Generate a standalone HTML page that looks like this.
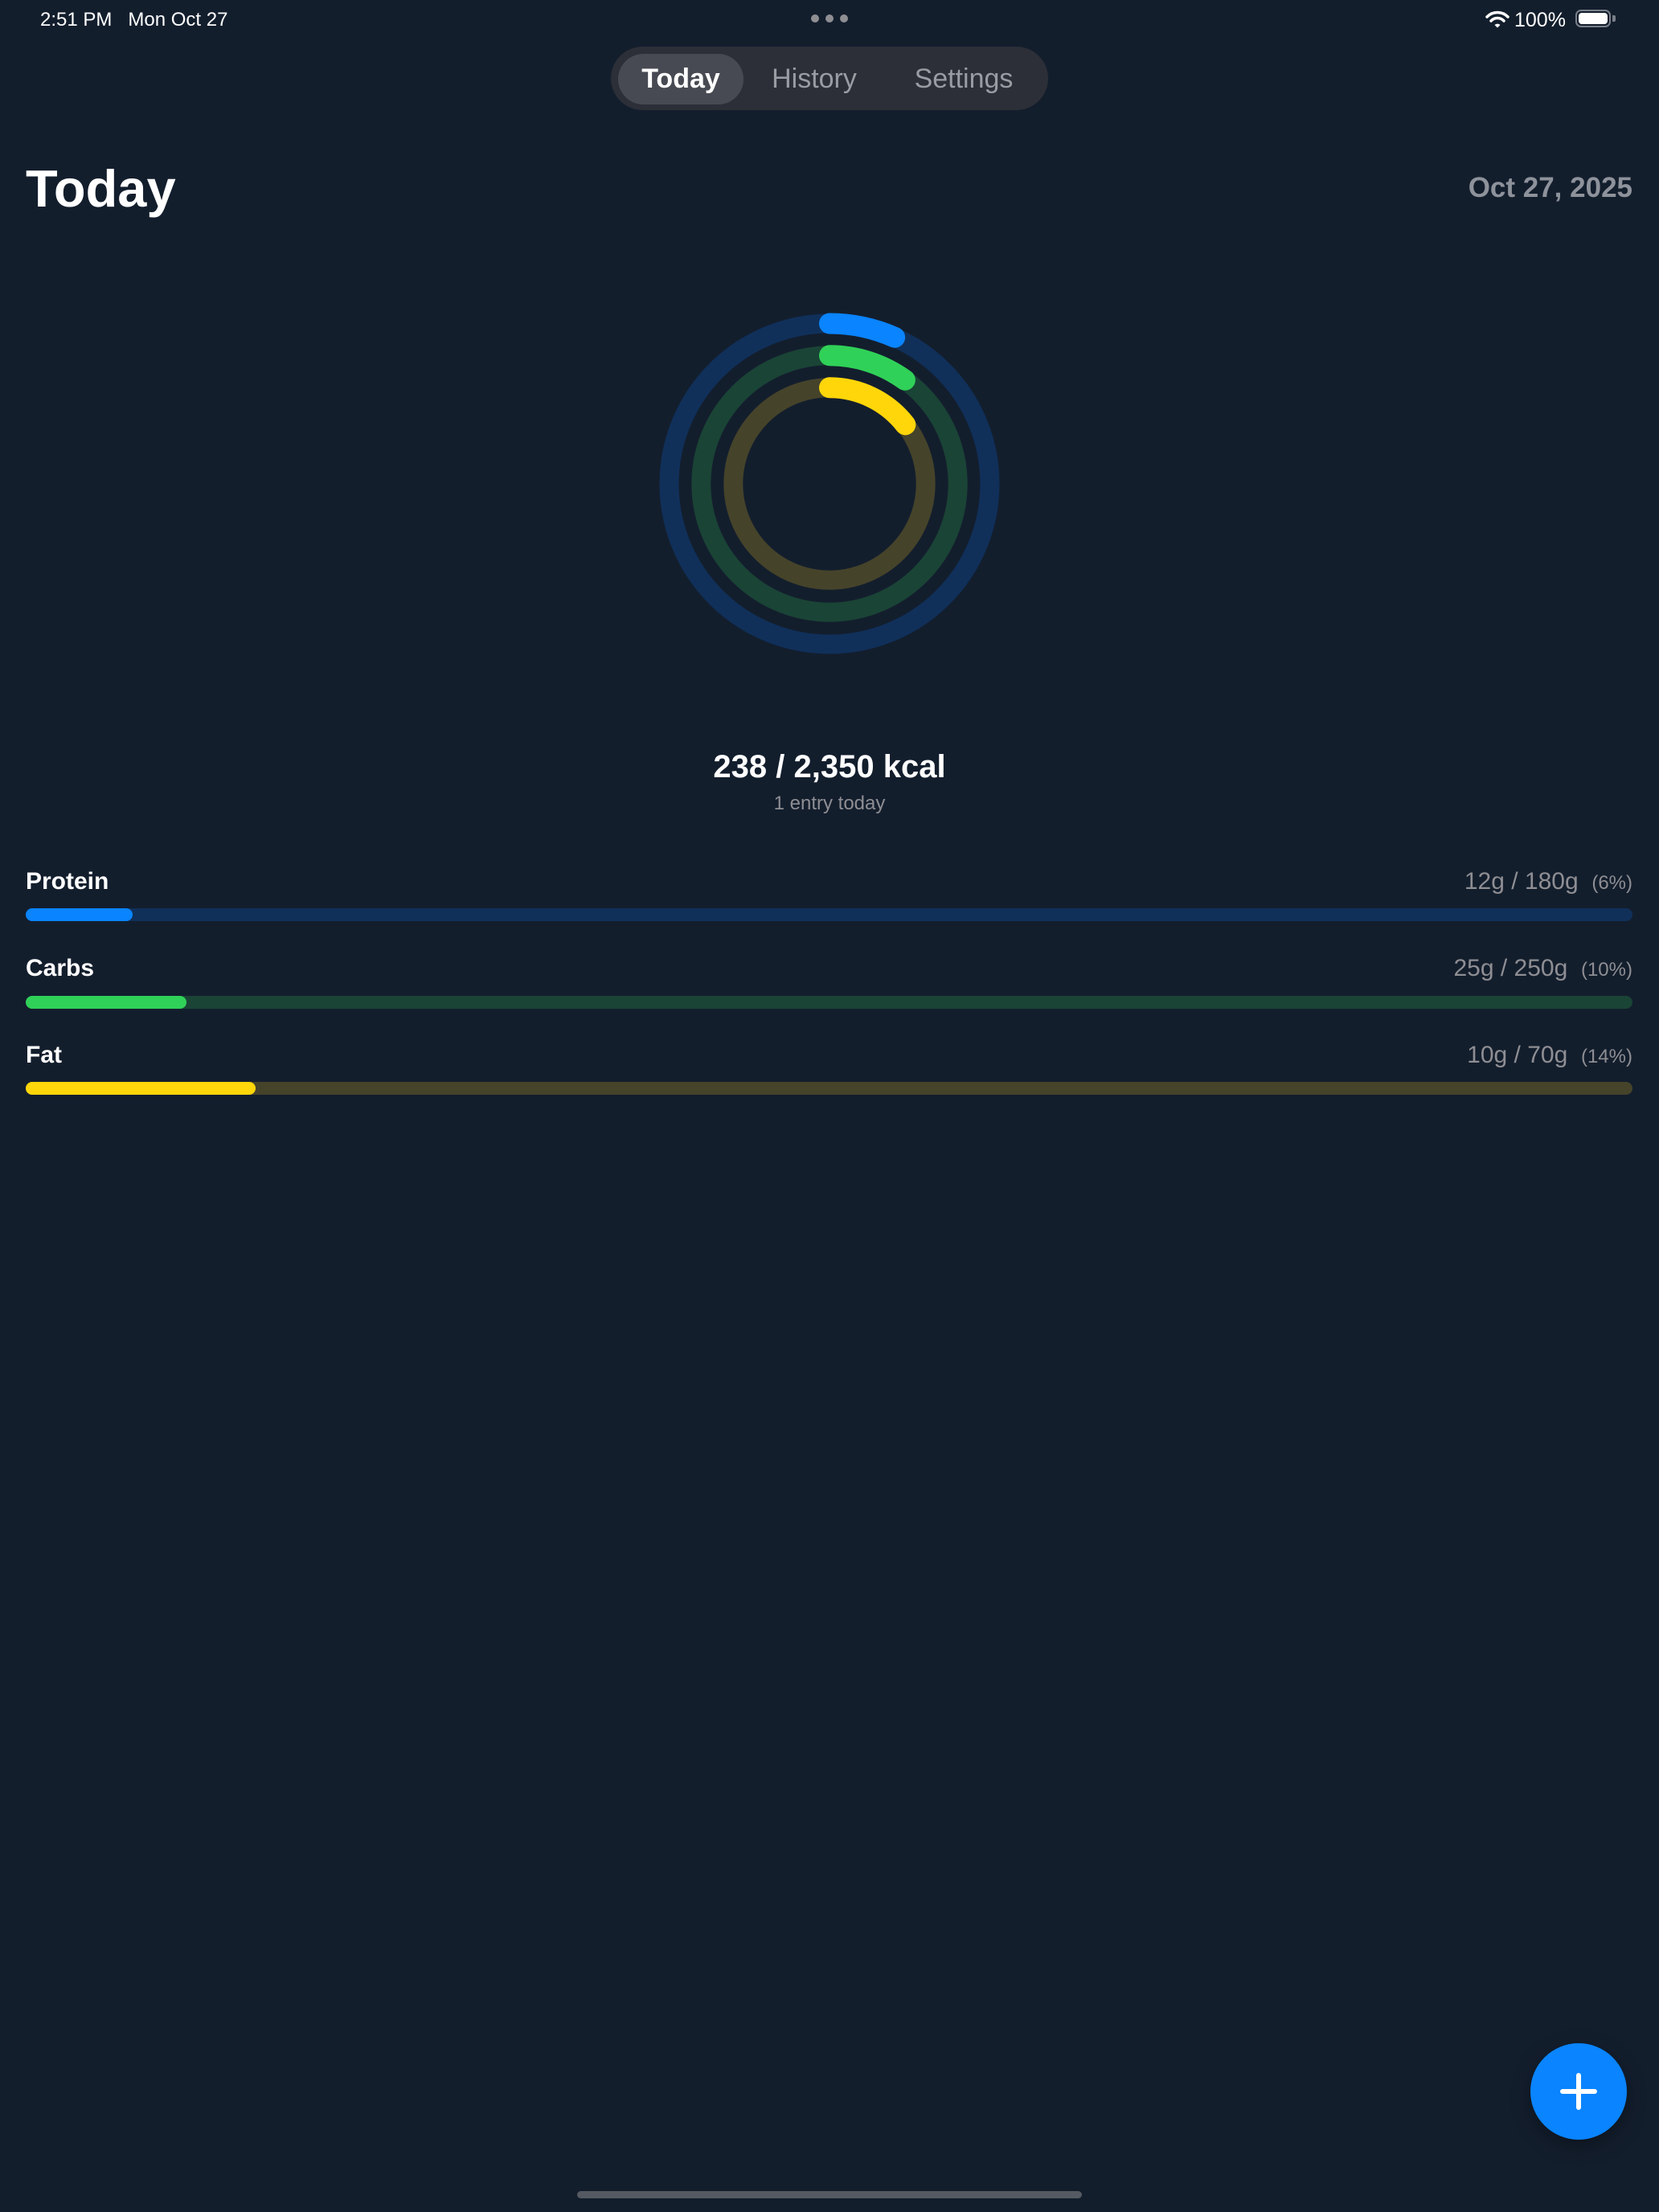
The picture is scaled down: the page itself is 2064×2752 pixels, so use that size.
<!DOCTYPE html>
<html><head><meta charset="utf-8"><style>
*{margin:0;padding:0;box-sizing:border-box}
html,body{width:2064px;height:2752px;background:#131e2d;overflow:hidden;font-family:"Liberation Sans",sans-serif;color:#fff}
.abs{position:absolute}
</style></head><body>
<div class="abs" style="left:50px;top:10px;font-size:24px;line-height:30px;font-weight:500">2:51 PM&nbsp;&nbsp;&nbsp;Mon Oct 27</div>
<svg class="abs" style="left:1008px;top:16px" width="48" height="14"><circle cx="6" cy="7" r="5" fill="#8e8e93"/><circle cx="24" cy="7" r="5" fill="#8e8e93"/><circle cx="42" cy="7" r="5" fill="#8e8e93"/></svg>
<svg class="abs" style="left:1848px;top:12px" width="30" height="24" viewBox="0 0 30 24"><path d="M2 9 A18 18 0 0 1 28 9" stroke="#fff" stroke-width="3.5" fill="none" stroke-linecap="round"/><path d="M7 14 A11 11 0 0 1 23 14" stroke="#fff" stroke-width="3.5" fill="none" stroke-linecap="round"/><path d="M11.5 19 L15 22.5 L18.5 19 A5 5 0 0 0 11.5 19Z" fill="#fff"/></svg>
<div class="abs" style="left:1884px;top:10px;font-size:25px;line-height:30px">100%</div>
<div class="abs" style="left:1960px;top:12px;width:44px;height:22px;border:2.5px solid #7a7f88;border-radius:7px;padding:2px"><div style="width:100%;height:100%;background:#fff;border-radius:4px"></div></div>
<div class="abs" style="left:2006px;top:19px;width:4px;height:8px;background:#7a7f88;border-radius:0 2px 2px 0"></div>

<div class="abs" style="left:760px;top:58px;width:544px;height:79px;background:#2c2f37;border-radius:40px"></div>
<div class="abs" style="left:769px;top:67px;width:156px;height:63px;background:#474a52;border-radius:32px"></div>
<div class="abs" style="left:769px;top:67px;width:156px;height:63px;line-height:63px;text-align:center;font-size:34px;font-weight:600">Today</div>
<div class="abs" style="left:940px;top:67px;width:146px;height:63px;line-height:63px;text-align:center;font-size:34px;color:#9a9ca3">History</div>
<div class="abs" style="left:1116px;top:67px;width:166px;height:63px;line-height:63px;text-align:center;font-size:34px;color:#9a9ca3">Settings</div>

<div class="abs" style="left:32px;top:195px;font-size:65px;line-height:80px;font-weight:700">Today</div>
<div class="abs" style="right:33px;top:212px;font-size:35px;line-height:44px;font-weight:600;color:#8e929b">Oct 27, 2025</div>

<svg class="abs" style="left:0;top:0" width="2064" height="1000">
<g fill="none" stroke-width="24" stroke-linecap="round">
<circle cx="1032" cy="602" r="199.5" stroke="#10305a"/>
<circle cx="1032" cy="602" r="159.7" stroke="#1a4436"/>
<circle cx="1032" cy="602" r="119.7" stroke="#45432a"/>
<circle cx="1032" cy="602" r="199.5" stroke="#0a84ff" stroke-width="26" stroke-dasharray="83.6 2000" transform="rotate(-90 1032 602)"/>
<circle cx="1032" cy="602" r="159.7" stroke="#30d158" stroke-width="26" stroke-dasharray="100.3 2000" transform="rotate(-90 1032 602)"/>
<circle cx="1032" cy="602" r="119.7" stroke="#ffd60a" stroke-width="26" stroke-dasharray="108.6 2000" transform="rotate(-90 1032 602)"/>
</g></svg>

<div class="abs" style="left:0;width:2064px;top:930px;text-align:center;font-size:40px;line-height:48px;font-weight:600">238 / 2,350 kcal</div>
<div class="abs" style="left:0;width:2064px;top:985px;text-align:center;font-size:24px;line-height:30px;color:#8e8e93">1 entry today</div>

<div class="abs" style="left:32px;top:1078px;font-size:30px;line-height:38px;font-weight:600">Protein</div>
<div class="abs" style="right:33px;top:1078px;font-size:30px;line-height:38px;color:#8e8e93">12g / 180g&nbsp; <span style="font-size:24px">(6%)</span></div>
<div class="abs" style="left:32px;top:1130px;width:1999px;height:16px;background:#10305a;border-radius:8px"><div style="width:133px;height:16px;background:#0a84ff;border-radius:8px"></div></div>

<div class="abs" style="left:32px;top:1186px;font-size:30px;line-height:38px;font-weight:600">Carbs</div>
<div class="abs" style="right:33px;top:1186px;font-size:30px;line-height:38px;color:#8e8e93">25g / 250g&nbsp; <span style="font-size:24px">(10%)</span></div>
<div class="abs" style="left:32px;top:1239px;width:1999px;height:16px;background:#1a4436;border-radius:8px"><div style="width:200px;height:16px;background:#30d158;border-radius:8px"></div></div>

<div class="abs" style="left:32px;top:1294px;font-size:30px;line-height:38px;font-weight:600">Fat</div>
<div class="abs" style="right:33px;top:1294px;font-size:30px;line-height:38px;color:#8e8e93">10g / 70g&nbsp; <span style="font-size:24px">(14%)</span></div>
<div class="abs" style="left:32px;top:1346px;width:1999px;height:16px;background:#45432a;border-radius:8px"><div style="width:286px;height:16px;background:#ffd60a;border-radius:8px"></div></div>

<div class="abs" style="left:1904px;top:2542px;width:120px;height:120px;border-radius:60px;background:#0a84ff;box-shadow:0 8px 24px rgba(0,0,0,0.35)"></div>
<svg class="abs" style="left:1904px;top:2542px" width="120" height="120"><path d="M60 40V80M40 60H80" stroke="#fff" stroke-width="6" stroke-linecap="round"/></svg>

<div class="abs" style="left:718px;top:2726px;width:628px;height:9px;background:#555a62;border-radius:5px"></div>
</body></html>
